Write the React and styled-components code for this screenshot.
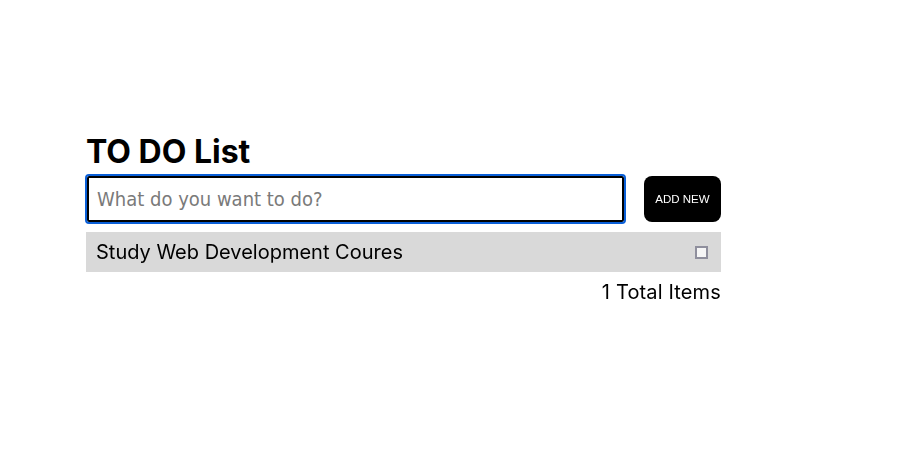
import React from 'react';
import styled, { createGlobalStyle } from 'styled-components';

const GlobalStyle = createGlobalStyle`
  body {
    margin: 0;
    background: #fff;
    font-family: Inter, "Liberation Sans", sans-serif;
  }
`;

const Page = styled.div`
  padding: 132px 0 0 86px;
`;

const TodoBox = styled.div`
  width: 635px;
`;

const Title = styled.h1`
  margin: 0 0 5px 0;
  font-size: 32px;
  font-weight: 700;
  line-height: 39px;
  color: #000;
`;

const InputRow = styled.form`
  display: flex;
  align-items: center;
  gap: 20px;
  padding-left: 1px;
`;

const TaskInput = styled.input`
  flex: 1;
  height: 46px;
  box-sizing: border-box;
  border: 2px solid #000;
  border-radius: 2px;
  padding: 0 8px;
  font-family: "DejaVu Sans Condensed", "DejaVu Sans", sans-serif;
  font-stretch: condensed;
  font-size: 20px;
  color: #000;
  &::placeholder {
    color: #7a7a7a;
  }
  &:focus {
    outline: 2px solid #0a5fd8;
    outline-offset: 0;
  }
`;

const AddButton = styled.button`
  width: 77px;
  height: 46px;
  padding: 0;
  border: none;
  border-radius: 8px;
  background: #000;
  color: #fff;
  font-family: "Liberation Sans", Arial, sans-serif;
  font-size: 11.5px;
  cursor: pointer;
`;

const ItemList = styled.ul`
  list-style: none;
  margin: 10px 0 0 0;
  padding: 0;
`;

const Item = styled.li`
  display: flex;
  align-items: center;
  justify-content: space-between;
  height: 40px;
  padding: 0 10px;
  background: #d9d9d9;
  font-size: 20px;
  color: #000;
`;

const Check = styled.input`
  appearance: none;
  box-sizing: border-box;
  margin: 0 3px 0 0;
  width: 13px;
  height: 13px;
  border: 2px solid #8f8f9d;
  background: #f6f6f6;
`;

const Footer = styled.div`
  margin-top: 8px;
  text-align: right;
  font-size: 20px;
  line-height: 24px;
  letter-spacing: 0.15px;
  color: #000;
`;

const App = () => {
  const items = ['Study Web Development Coures'];

  return (
    <Page>
      <GlobalStyle />
      <TodoBox>
        <Title>TO DO List</Title>
        <InputRow onSubmit={(e) => e.preventDefault()}>
          <TaskInput autoFocus placeholder="What do you want to do?" />
          <AddButton type="submit">ADD NEW</AddButton>
        </InputRow>
        <ItemList>
          {items.map((item) => (
            <Item key={item}>
              <span>{item}</span>
              <Check type="checkbox" />
            </Item>
          ))}
        </ItemList>
        <Footer>{items.length} Total Items</Footer>
      </TodoBox>
    </Page>
  );
};

export default App;
